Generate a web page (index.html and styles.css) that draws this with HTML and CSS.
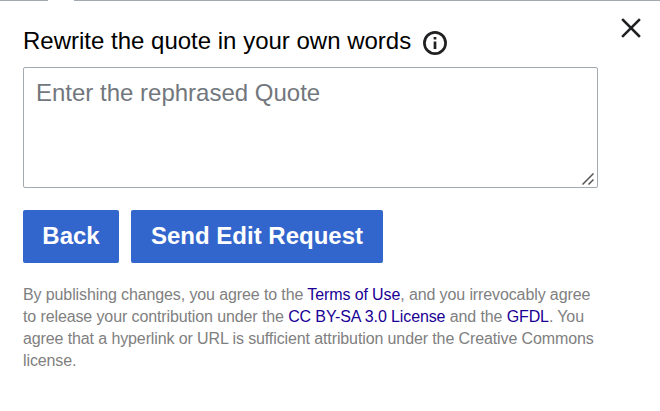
FILE: index.html
```html
<!DOCTYPE html>
<html lang="en">
<head>
<meta charset="utf-8">
<title>Rewrite quote</title>
<link rel="stylesheet" href="styles.css">
</head>
<body>
<main class="dialog">
  <span class="notch"></span>
  <button class="close" aria-label="Close"><svg width="20" height="20" viewBox="0 0 20 20"><path d="M2 2l16 16M18 2l-16 16"/></svg></button>
  <div class="heading">
    <label for="quote">Rewrite the quote in your own words</label>
    <svg class="info" width="24" height="24" viewBox="0 0 24 24"><circle cx="12" cy="12" r="10.600"/><path d="M12 10.500v7.500M12 6v2.500"/></svg>
  </div>
  <div class="field-wrap">
    <textarea id="quote" class="field" placeholder="Enter the rephrased Quote"></textarea>
    <svg class="grip" width="12" height="12" viewBox="0 0 12 12"><path d="M.5 11.500l11-11M6.500 11.500l5-5"/></svg>
  </div>
  <div class="actions">
    <button class="button button-back">Back</button>
    <button class="button button-send">Send Edit Request</button>
  </div>
  <p class="legal">By publishing changes, you agree to the <a>Terms of Use</a>, and you irrevocably agree<br>to release your contribution under the <a>CC BY-SA 3.0 License</a> and the <a>GFDL</a>. You<br>agree that a hyperlink or URL is sufficient attribution under the Creative Commons<br>license.</p>
</main>
</body>
</html>
```
FILE: styles.css
```css
* { box-sizing: border-box; }
body { margin: 0; background: #fff; font-family: "Liberation Sans", Arial, sans-serif; }
.dialog { position: relative; height: 411px; padding: 25px 23px 0; border-top: 1px solid #a2a9b1; }
.notch { position: absolute; top: -1px; left: 48px; width: 26px; height: 1px; background: #fff; }
.close { position: absolute; top: 17px; right: 19px; width: 20px; height: 20px; padding: 0; border: 0; background: none; }
.close svg { display: block; fill: none; stroke: #202122; stroke-width: 2.500; stroke-linecap: square; }
.heading { display: flex; align-items: center; gap: 12px; height: 30px; font-size: 24px; line-height: 30px; color: #000; white-space: nowrap; }
.info { position: relative; top: 2px; fill: none; stroke: #202122; stroke-width: 2.700; }
.field-wrap { position: relative; width: 575px; height: 121px; margin-top: 11px; }
.field { display: block; width: 100%; height: 100%; padding: 11px 12px; border: 1px solid #a2a9b1; border-radius: 2px; background: #fff; font: 24px/28px "Liberation Sans", Arial, sans-serif; resize: none; outline: 0; }
.field::placeholder { color: #72777d; opacity: 1; }
.grip { position: absolute; right: 4px; bottom: 3px; fill: none; stroke: #555; stroke-width: 1.500; }
.actions { display: flex; gap: 12px; margin-top: 22px; }
.button { height: 53px; padding: 0 0 2px; border: 0; border-radius: 2px; background: #36c; color: #fff; font: bold 24px/28px "Liberation Sans", Arial, sans-serif; white-space: nowrap; }
.button-back { width: 96px; }
.button-send { width: 252px; }
.legal { margin: 21px 0 0; font-size: 16px; line-height: 22px; letter-spacing: -.112px; color: #808080; white-space: nowrap; }
.legal a { color: #1a0094; }
```
